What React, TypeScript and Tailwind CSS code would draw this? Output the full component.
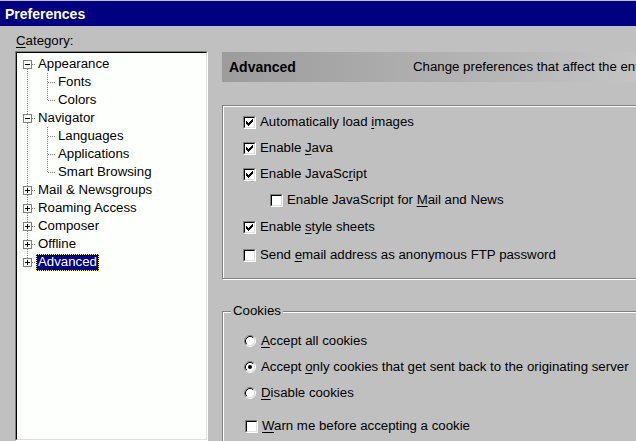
import React from "react"

const FONT = { fontFamily: '"Liberation Sans", Arial, sans-serif' }

/* ─── Text with an underlined access key ─── */
function Mnemonic({ text, at }: { text: string; at?: number }) {
    if (at === undefined) return <>{text}</>
    return (
        <>
            {text.slice(0, at)}
            <span className="underline underline-offset-2">{text[at]}</span>
            {text.slice(at + 1)}
        </>
    )
}

function CheckBox({ checked }: { checked?: boolean }) {
    return (
        <div className="w-[13px] h-[13px] shrink-0 border border-[#808080] border-r-white border-b-white">
            <div className="w-full h-full border border-black border-r-[#dfdfdf] border-b-[#dfdfdf] bg-white flex items-center justify-center">
                {checked && (
                    <svg width="9" height="9" viewBox="0 0 9 9" shapeRendering="crispEdges">
                        <path d="M1 3h1v1h1v1h1V4h1V3h1V2h1V1h1v3H7v1H6v1H5v1H4v1H3V7H2V6H1z" fill="black" />
                    </svg>
                )}
            </div>
        </div>
    )
}

function Radio({ checked }: { checked?: boolean }) {
    return (
        <svg width="12" height="12" viewBox="0 0 12 12" className="shrink-0">
            <circle cx="6" cy="6" r="4.5" fill="white" />
            <path d="M2.11 9.89 A5.5 5.5 0 0 1 9.89 2.11" stroke="#808080" fill="none" />
            <path d="M9.89 2.11 A5.5 5.5 0 0 1 2.11 9.89" stroke="white" fill="none" />
            <path d="M2.82 9.18 A4.5 4.5 0 0 1 9.18 2.82" stroke="black" fill="none" />
            <path d="M9.18 2.82 A4.5 4.5 0 0 1 2.82 9.18" stroke="#dfdfdf" fill="none" />
            {checked && <circle cx="6" cy="6" r="2" fill="black" />}
        </svg>
    )
}

type Node = {
    label: string
    level: 0 | 1
    expanded?: boolean
    first?: boolean
    last?: boolean
    selected?: boolean
}

const tree: Node[] = [
    { label: "Appearance", level: 0, expanded: true, first: true },
    { label: "Fonts", level: 1 },
    { label: "Colors", level: 1, last: true },
    { label: "Navigator", level: 0, expanded: true },
    { label: "Languages", level: 1 },
    { label: "Applications", level: 1 },
    { label: "Smart Browsing", level: 1, last: true },
    { label: "Mail & Newsgroups", level: 0 },
    { label: "Roaming Access", level: 0 },
    { label: "Composer", level: 0 },
    { label: "Offline", level: 0 },
    { label: "Advanced", level: 0, last: true, selected: true },
]

const DOT = { stroke: "#808080", strokeDasharray: "1 1", fill: "none" }

function TreeLines({ node }: { node: Node }) {
    if (node.level === 0) {
        return (
            <svg width="19" height="18" viewBox="0 0 19 18" className="shrink-0" shapeRendering="crispEdges">
                {!node.first && <line x1="10.5" y1="0" x2="10.5" y2="5" {...DOT} />}
                {!node.last && <line x1="10.5" y1="14" x2="10.5" y2="18" {...DOT} />}
                <line x1="15" y1="9.5" x2="19" y2="9.5" {...DOT} />
                <rect x="6.5" y="5.5" width="8" height="8" fill="white" stroke="#808080" />
                <line x1="8" y1="9.5" x2="13" y2="9.5" stroke="black" />
                {!node.expanded && <line x1="10.5" y1="7" x2="10.5" y2="12" stroke="black" />}
            </svg>
        )
    }
    return (
        <svg width="39" height="18" viewBox="0 0 39 18" className="shrink-0" shapeRendering="crispEdges">
            <line x1="10.5" y1="0" x2="10.5" y2="18" {...DOT} />
            <line x1="30.5" y1="0" x2="30.5" y2={node.last ? 10 : 18} {...DOT} />
            <line x1="31" y1="9.5" x2="39" y2="9.5" {...DOT} />
        </svg>
    )
}

const checks = [
    { text: "Automatically load images", at: 19, checked: true, indent: false, h: "h-[26px]" },
    { text: "Enable Java", at: 7, checked: true, indent: false, h: "h-[26px]" },
    { text: "Enable JavaScript", at: 13, checked: true, indent: false, h: "h-[26px]" },
    { text: "Enable JavaScript for Mail and News", at: 22, checked: false, indent: true, h: "h-[26px]" },
    { text: "Enable style sheets", at: 7, checked: true, indent: false, h: "h-[28px]" },
    { text: "Send email address as anonymous FTP password", at: 5, checked: false, indent: false, h: "h-[28px]" },
]

const cookies = [
    { text: "Accept all cookies", at: 0, checked: false },
    { text: "Accept only cookies that get sent back to the originating server", at: 7, checked: true },
    { text: "Disable cookies", at: 0, checked: false },
]

export default function App() {
    return (
        <div
            className="w-[636px] h-[441px] overflow-hidden bg-[#c0c0c0] text-black text-[13.25px] leading-4 flex flex-col"
            style={FONT}
        >
            {/* Title bar */}
            <div className="h-[26px] shrink-0 border-t border-[#c0c0c0] bg-[#000080] text-white font-bold text-[14px] flex items-center pl-[5px]">
                Preferences
            </div>

            <div className="flex flex-1 min-h-0">
                {/* Category tree */}
                <div className="w-[208px] shrink-0 pl-[15px] pt-[7px] flex flex-col">
                    <div className="h-4 ml-px">
                        <Mnemonic text="Category:" at={0} />
                    </div>
                    <div className="mt-[2px] h-[420px] border border-[#808080] border-r-white border-b-white">
                        <div className="h-full border border-black border-r-[#dfdfdf] border-b-[#dfdfdf] bg-[#fdfffd] pt-[2px]">
                            {tree.map((node) => (
                                <div key={node.label} className="h-[18px] flex items-center">
                                    <TreeLines node={node} />
                                    <span
                                        className={`h-[17px] px-[2px] flex items-center whitespace-nowrap ${
                                            node.selected ? "bg-[#000080] text-white outline-1 outline-dotted outline-[#ffff00] -outline-offset-1" : ""
                                        }`}
                                    >
                                        {node.label}
                                    </span>
                                </div>
                            ))}
                        </div>
                    </div>
                </div>

                {/* Settings panel */}
                <div className="flex-1 min-w-0 overflow-hidden pl-[14px] pt-[26px]">
                    <div className="w-[460px] h-[30px] flex items-center bg-linear-to-r from-[#9c9c9c] to-[#c8c8c8] whitespace-nowrap">
                        <div className="w-[191px] shrink-0 pl-[7px] font-bold text-[14px]">Advanced</div>
                        <div>Change preferences that affect the entire product</div>
                    </div>

                    <div className="mt-[23px] w-[460px] h-[174px] border border-[#808080] shadow-[inset_1px_1px_0_white,1px_1px_0_white] pt-[3px] pl-[20px]">
                        {checks.map((c) => (
                            <div key={c.text} className={`${c.h} flex items-center gap-1 ${c.indent ? "pl-[27px]" : ""}`}>
                                <CheckBox checked={c.checked} />
                                <span className="whitespace-nowrap">
                                    <Mnemonic text={c.text} at={c.at} />
                                </span>
                            </div>
                        ))}
                    </div>

                    <fieldset className="mt-[24px] w-[460px] h-[200px] border border-[#808080] shadow-[inset_1px_1px_0_white,1px_1px_0_white]">
                        <legend className="ml-[8px] px-[2px] h-4 bg-[#c0c0c0]">Cookies</legend>
                        <div className="pl-[20px] pt-[9px]">
                            {cookies.map((r) => (
                                <div key={r.text} className="h-[26px] flex items-center gap-[5px] pl-px">
                                    <Radio checked={r.checked} />
                                    <span className="whitespace-nowrap">
                                        <Mnemonic text={r.text} at={r.at} />
                                    </span>
                                </div>
                            ))}
                            <div className="mt-[7px] h-[26px] flex items-center gap-1 pl-[2px]">
                                <CheckBox />
                                <span className="whitespace-nowrap">
                                    <Mnemonic text="Warn me before accepting a cookie" at={0} />
                                </span>
                            </div>
                        </div>
                    </fieldset>
                </div>
            </div>
        </div>
    )
}
